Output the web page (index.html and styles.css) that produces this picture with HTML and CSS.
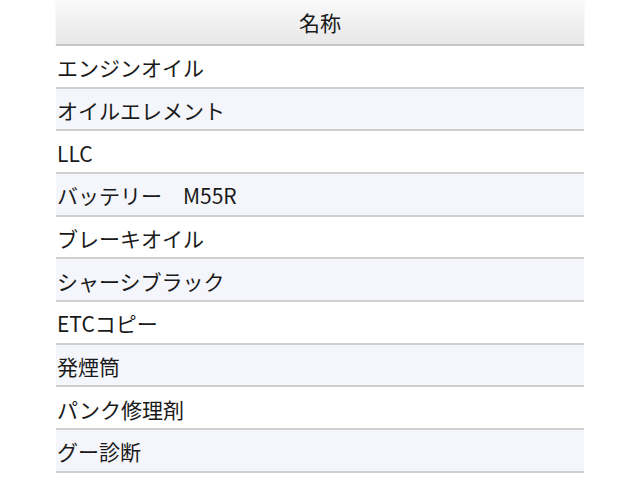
FILE: index.html
```html
<!DOCTYPE html>
<html lang="ja">
<head>
<meta charset="utf-8">
<link rel="stylesheet" href="styles.css">
</head>
<body>
<div class="table">
  <div class="head">名称</div>
  <div class="row">エンジンオイル</div>
  <div class="row alt">オイルエレメント</div>
  <div class="row">LLC</div>
  <div class="row alt">バッテリー　M55R</div>
  <div class="row">ブレーキオイル</div>
  <div class="row alt">シャーシブラック</div>
  <div class="row">ETCコピー</div>
  <div class="row alt">発煙筒</div>
  <div class="row">パンク修理剤</div>
  <div class="row alt">グー診断</div>
</div>
</body>
</html>
```
FILE: styles.css
```css
html, body { margin: 0; padding: 0; background: #fff; }
body { font-family: "Noto Sans CJK JP", sans-serif; color: #1a1a1a; }
.table { margin-left: 56px; width: 528px; display: flex; flex-direction: column; }
.head {
  height: 44px;
  flex: none;
  display: flex; align-items: center; justify-content: center;
  font-size: 21px;
  background: linear-gradient(#f9f9f9, #e8e8e8);
  border-bottom: 2px solid #c6c6c6;
  box-shadow: 0 1px 2px rgba(0,0,0,0.08);
}
.row {
  height: 40.67px;
  flex: none;
  display: flex; align-items: center;
  padding-left: 1px;
  padding-top: 2px;
  box-sizing: content-box;
  font-size: 21px;
  border-bottom: 2px solid #d0d0d0;
  background: #fff;
}
.row { height: 38.67px; }
.row.alt { background: #f4f6fb; }
```
